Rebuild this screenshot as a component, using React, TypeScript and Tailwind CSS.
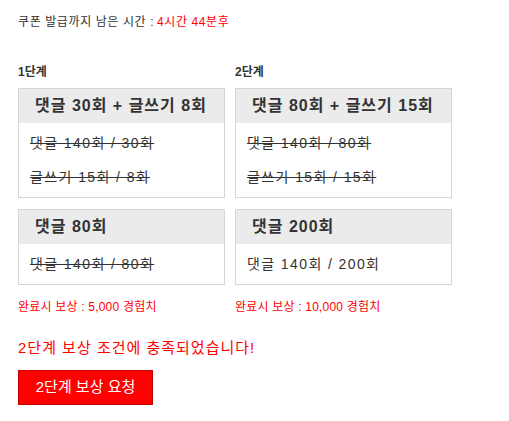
import React from 'react';

const font = { fontFamily: '"Liberation Sans", "Noto Sans CJK KR", sans-serif' };

type Stage = {
  title: string;
  lines: { text: string; done: boolean }[];
};

function Card({ stage, className }: { stage: Stage; className?: string }) {
  return (
    <div className={`border border-[#d6d6d6] bg-white ${className ?? ''}`}>
      <div className="h-[34px] bg-[#ebebeb] pl-[16px] flex items-center text-[16px] font-semibold tracking-[1px] text-[#333] whitespace-nowrap">
        {stage.title}
      </div>
      <div className="py-[3px] pl-[11px]">
        {stage.lines.map((l) => (
          <div
            key={l.text}
            className={`h-[34px] flex items-center text-[14px] tracking-[1.4px] text-[#333] whitespace-nowrap ${l.done ? 'line-through' : ''}`}
          >
            {l.text}
          </div>
        ))}
      </div>
    </div>
  );
}

export default function App() {
  const stages: Stage[] = [
    {
      title: '댓글 30회 + 글쓰기 8회',
      lines: [
        { text: '댓글 140회 / 30회', done: true },
        { text: '글쓰기 15회 / 8회', done: true },
      ],
    },
    {
      title: '댓글 80회 + 글쓰기 15회',
      lines: [
        { text: '댓글 140회 / 80회', done: true },
        { text: '글쓰기 15회 / 15회', done: true },
      ],
    },
    {
      title: '댓글 80회',
      lines: [{ text: '댓글 140회 / 80회', done: true }],
    },
    {
      title: '댓글 200회',
      lines: [{ text: '댓글 140회 / 200회', done: false }],
    },
  ];

  return (
    <div className="w-[509px] h-[421px] bg-white px-[18px] pt-[15px]" style={font}>
      {/* Timer */}
      <div className="h-[14px] flex items-center text-[12px] tracking-[0.6px] text-[#333] whitespace-nowrap">
        쿠폰 발급까지 남은 시간 : <span className="text-[#ff0000] ml-[3px]">4시간 44분후</span>
      </div>

      {/* Stages */}
      <div className="mt-[36px] grid grid-cols-[207px_217px] gap-x-[10px]">
        <div className="h-[14px] flex items-center text-[12px] font-bold text-[#333]">1단계</div>
        <div className="h-[14px] flex items-center text-[12px] font-bold text-[#333]">2단계</div>

        <Card stage={stages[0]} className="mt-[9px]" />
        <Card stage={stages[1]} className="mt-[9px]" />

        <Card stage={stages[2]} className="mt-[11px]" />
        <Card stage={stages[3]} className="mt-[11px]" />

        <div className="mt-[15px] h-[14px] flex items-center text-[12px] tracking-[0.2px] text-[#ff0000] whitespace-nowrap">
          완료시 보상 : 5,000 경험치
        </div>
        <div className="mt-[15px] h-[14px] flex items-center text-[12px] tracking-[0.2px] text-[#ff0000] whitespace-nowrap">
          완료시 보상 : 10,000 경험치
        </div>
      </div>

      <div className="mt-[26px] h-[16px] flex items-center text-[15px] tracking-[1px] text-[#ff0000] whitespace-nowrap">
        2단계 보상 조건에 충족되었습니다!
      </div>

      <button className="mt-[14px] w-[135px] h-[35px] bg-[#ff0000] border border-[#c40000] text-white text-[15px] flex items-center justify-center">
        2단계 보상 요청
      </button>
    </div>
  );
}
